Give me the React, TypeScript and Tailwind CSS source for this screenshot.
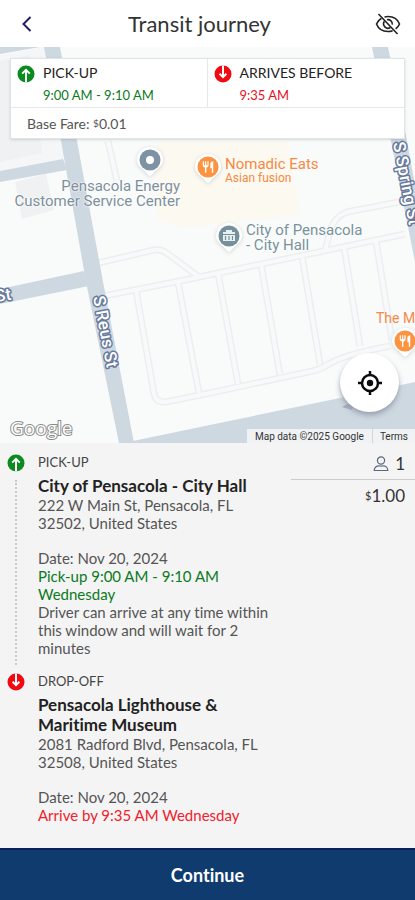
import React from "react";
import { MdRestaurant } from "react-icons/md";

interface StopProps {
  label: string;
  name: string;
  address: string;
  date: string;
  time: string;
  note?: string;
  kind: "up" | "down";
}

interface PinProps {
  color: string;
  children?: React.ReactNode;
}

const StopIcon: React.FC<{ kind: "up" | "down" }> = ({ kind }) => (
  <svg viewBox="0 0 18 18" className="h-[18px] w-[18px] shrink-0" aria-hidden="true">
    <circle cx="9" cy="9" r="8.5" fill={kind === "up" ? "#0b8a1f" : "#f00a12"} />
    {kind === "up" ? (
      <path d="M9 17.5V5M5.2 8.6 9 4.8l3.8 3.8" fill="none" stroke="#fff" strokeWidth="2" />
    ) : (
      <path d="M9 .5V12M5.6 8.8 9 12.2l3.4-3.4" fill="none" stroke="#fff" strokeWidth="2" />
    )}
  </svg>
);

const EyeOffIcon = () => (
  <svg viewBox="0 0 26 22" className="h-[22px] w-[26px]" fill="none" stroke="#222" strokeWidth="1.6" aria-hidden="true">
    <path d="M6.5 5.3C4 6.800 2.200 9 1.500 11c1.700 4.500 6.200 7.500 11.500 7.500 1.600 0 3.200-.3 4.600-.8" />
    <path d="M9.500 3.900c1.100-.3 2.300-.4 3.500-.4 5.300 0 9.800 3 11.500 7.500-.7 1.900-2.100 3.600-3.900 4.900" />
    <path d="M9.400 8.300a4.400 4.400 0 0 0 6 6.200M12 6.700a4.400 4.400 0 0 1 5.300 5" />
    <path d="m3.500 1 19 20" />
  </svg>
);

const PersonIcon = () => (
  <svg viewBox="0 0 16 18" className="h-[18px] w-4" fill="none" stroke="#5c6782" strokeWidth="1.2" aria-hidden="true">
    <circle cx="8" cy="5.5" r="3.6" />
    <path d="M1.200 15.500c0-3.200 2.600-4.700 4.600-4.700.8.5 3.600.5 4.400 0 2 0 4.600 1.500 4.600 4.700z" />
  </svg>
);

const Pin: React.FC<PinProps> = ({ color, children }) => (
  <span className="relative flex h-[30px] w-[26px] shrink-0 justify-center pt-[3px]">
    <svg viewBox="0 0 26 30" className="absolute inset-0 drop-shadow-sm" aria-hidden="true">
      <path d="M13 0a13 13 0 0 1 13 13c0 6-6 8.500-10.500 14-1.500 2.200-3.500 2.200-5 0C6 21.500 0 19 0 13A13 13 0 0 1 13 0z" fill="#fff" />
      <circle cx="13" cy="13" r="10.500" fill={color} />
    </svg>
    <span className="relative flex h-5 items-center text-white">{children}</span>
  </span>
);

const MuseumIcon = () => (
  <svg viewBox="0 0 14 12" className="h-3 w-[14px]" fill="#e9f0f2" aria-hidden="true">
    <path d="M4 0h6v2h3v2H1V2h3zM1 5h12v6H1z" />
    <path d="M3.500 6v4M7 6v4M10.500 6v4" stroke="#75909b" strokeWidth="1.200" />
  </svg>
);

const parkingLanes =
  "M104 249 180 234 405 187M98 216l56-13q8-1 14 4l31 23M325 204l5-20q4-14 17-19l52-10M108 94l9 40M136 243l18 104q2 9 12 8l39-8 108-23q10-3 16-7 14-9 61-18M178 235l21 111M218 226l20 111M261 217l19 111M302 209l18 108M344 200l16 99M376 194l16 99";

const MapCanvas = () => (
  <svg
    viewBox="0 0 415 396"
    preserveAspectRatio="xMidYMid slice"
    className="absolute inset-0 h-full w-full"
    aria-hidden="true"
  >
    <rect width="415" height="396" fill="#f9fafa" />
    <path d="M0 8 45 0l18 94 4 18-67 14z" fill="#f5f6f7" />
    <path d="M0 14l30-6 12 98-42 9zM15 135l31-8 8 36-32 9z" fill="#f0f1f2" />
    <path d="M157 94h131l12 74-121 13-22-9z" fill="#fcf9f0" />
    <path d={parkingLanes} fill="none" stroke="#eceef0" strokeWidth="7" strokeLinejoin="round" />
    <path d={parkingLanes} fill="none" stroke="#f8f9fa" strokeWidth="4" strokeLinejoin="round" />
    <g fill="#ced8e1">
      <path d="M0 0h40L0 7z" />
      <path d="M44 0h16l17 94 27 146 30 156h-15L87 240 61 94z" />
      <path d="M0 124l63-12 4 11-67 12zM0 242l84-18 5 15-89 18z" />
      <path d="M372 0h16l19 94 8 44v77L391 94z" />
      <path d="M133 394l72-15 135-28 75-16v61H133z" />
    </g>
    <path d="m342 360 13-7-3 10z" fill="#a3adba" />
    <g
      fill="#fff"
      stroke="#67799c"
      strokeWidth="3"
      paintOrder="stroke"
      strokeLinejoin="round"
      className="font-['Roboto'] text-[17px] font-medium"
    >
      <text transform="translate(93 250) rotate(79)">S Reus St</text>
      <text transform="translate(393 96) rotate(79)">S Spring St</text>
      <text transform="translate(-4 255) rotate(-9)">St</text>
    </g>
    <text
      x="10"
      y="388"
      fill="#fff"
      stroke="#8b8b8b"
      strokeWidth="2"
      paintOrder="stroke"
      className="font-['Open_Sans'] text-[19px] font-medium"
    >
      Google
    </text>
  </svg>
);

const JourneyMap = () => (
  <section className="relative h-[396px] overflow-hidden font-['Roboto',sans-serif]" aria-label="Map">
    <MapCanvas />

    <div className="absolute left-4 top-[100px] flex w-[164px] flex-col items-end text-right text-[15px] leading-[15px] text-[#7d909c]">
      <span className="mr-[17px]">
        <Pin color="#7d92a2">
          <span className="h-2 w-2 rounded-full bg-white" />
        </Pin>
      </span>
      <span className="whitespace-nowrap pt-[2px] [text-shadow:0_0_2px_#fff,0_0_2px_#fff]">
        Pensacola Energy
        <br />
        Customer Service Center
      </span>
    </div>
    <div className="absolute left-[195px] top-[107px] flex gap-1 text-[#f58a46]">
      <Pin color="#fb9340">
        <MdRestaurant size={14} />
      </Pin>
      <span className="pt-[3px] text-[15px] leading-[15px]">
        Nomadic Eats
        <span className="block text-xs leading-3">Asian fusion</span>
      </span>
    </div>
    <div className="absolute left-[216px] top-[176px] flex gap-1 text-[15px] leading-[15px] text-[#78929b]">
      <Pin color="#75909b">
        <MuseumIcon />
      </Pin>
      <span className="[text-shadow:0_0_2px_#fff,0_0_2px_#fff]">
        City of Pensacola
        <br />- City Hall
      </span>
    </div>
    <div className="absolute left-[376px] top-[264px] whitespace-nowrap text-sm leading-[15px] text-[#f58a46]">
      The M
      <span className="ml-4 block pt-[2px]">
        <Pin color="#fb9340">
          <MdRestaurant size={14} />
        </Pin>
      </span>
    </div>

    <div className="absolute inset-x-[10px] top-[11px] border border-[#dde5e9] bg-white font-['Lato',sans-serif] shadow-sm">
      <div className="grid grid-cols-2 border-b border-[#e4e8eb]">
        <div className="flex gap-2 border-r border-[#e4e8eb] px-[6px] pb-1 pt-[6px]">
          <StopIcon kind="up" />
          <div className="text-[13px] text-[#0b7a22]">
            <h2 className="text-sm leading-4 text-[#222]">PICK-UP</h2>
            <p className="mt-[6px] leading-4">9:00 AM - 9:10 AM</p>
          </div>
        </div>
        <div className="flex gap-2 px-[6px] pb-1 pt-[6px]">
          <StopIcon kind="down" />
          <div className="text-[13px] text-[#e8101f]">
            <h2 className="text-sm leading-4 text-[#222]">ARRIVES BEFORE</h2>
            <p className="mt-[6px] leading-4">9:35 AM</p>
          </div>
        </div>
      </div>
      <p className="px-4 pb-[5px] pt-[7px] text-sm leading-[18px] text-[#555]">
        Base Fare: <span className="align-[2px] text-[10px] leading-none">$</span>0.01
      </p>
    </div>

    <button
      aria-label="Center map"
      className="absolute bottom-[31px] right-4 flex h-[59px] w-[59px] items-center justify-center rounded-full bg-white shadow-md shadow-gray-400"
    >
      <svg viewBox="0 0 26 26" className="h-[26px] w-[26px]" fill="none" stroke="#0c0c10" strokeWidth="2.500">
        <circle cx="13" cy="13" r="8" />
        <circle cx="13" cy="13" r="3.200" fill="#0c0c10" stroke="none" />
        <path d="M13 1v4M13 21v4M1 13h4M21 13h4" />
      </svg>
    </button>

    <div className="absolute bottom-0 right-0 flex h-[14px] items-center bg-[#f0f2f4] text-[10px] text-[#333]">
      <span className="px-2">Map data ©2025 Google</span>
      <a href="#terms" className="border-l border-gray-300 px-[7px]">
        Terms
      </a>
    </div>
  </section>
);

const Stop: React.FC<StopProps> = ({ label, name, address, date, time, note, kind }) => (
  <li className="flex gap-[13px]">
    <div className="flex w-[18px] flex-col items-center gap-2">
      <StopIcon kind={kind} />
      {kind === "up" && <span className="mb-2 flex-1 border-l-2 border-dotted border-[#c9c9c9]" />}
    </div>
    <div className={kind === "up" ? "flex-1 pb-4" : "flex-1"}>
      <h2 className="text-[13px] leading-4 text-[#444]">{label}</h2>
      <h3 className="mt-[6px] text-[17px] font-bold leading-5 text-[#222]">{name}</h3>
      <p className="text-[15px] leading-[18px] text-[#555]">{address}</p>
      <p className="mt-[17px] text-[15px] leading-[18px] text-[#555]">{date}</p>
      <p className={kind === "up" ? "text-[15px] leading-[18px] text-[#0b7a22]" : "text-[15px] leading-[18px] text-[#f0202c]"}>
        {time}
      </p>
      {note && <p className="text-[15px] leading-[18px] text-[#555]">{note}</p>}
    </div>
  </li>
);

export default function App() {
  return (
    <div className="flex min-h-screen flex-col bg-[#f4f4f4] font-['Lato',sans-serif] [font-variant-ligatures:none]">
      <header className="flex h-[47px] items-center bg-white px-[14px]">
        <button aria-label="Back" className="flex w-[26px] justify-center">
          <svg viewBox="0 0 10 16" className="h-4 w-[10px]" fill="none" stroke="#1f1f66" strokeWidth="2" aria-hidden="true">
            <path d="M8.500 1 1.500 8l7 7" />
          </svg>
        </button>
        <h1 className="flex-1 pr-4 text-center text-[22px] leading-7 text-[#333]">Transit journey</h1>
        <button aria-label="Hide map">
          <EyeOffIcon />
        </button>
      </header>

      <JourneyMap />

      <main className="flex flex-1">
        <ol className="w-[70%] pb-5 pl-[7px] pr-3 pt-[11px]">
          <Stop
            kind="up"
            label="PICK-UP"
            name="City of Pensacola - City Hall"
            address="222 W Main St, Pensacola, FL 32502, United States"
            date="Date: Nov 20, 2024"
            time="Pick-up 9:00 AM - 9:10 AM Wednesday"
            note="Driver can arrive at any time within this window and will wait for 2 minutes"
          />
          <Stop
            kind="down"
            label="DROP-OFF"
            name="Pensacola Lighthouse & Maritime Museum"
            address="2081 Radford Blvd, Pensacola, FL 32508, United States"
            date="Date: Nov 20, 2024"
            time="Arrive by 9:35 AM Wednesday"
          />
        </ol>
        <aside className="w-[30%] pt-[9px] text-[17px] leading-6 text-[#333]">
          <p className="flex items-center justify-end gap-[6px] border-b border-[#ccc] pb-[3px] pr-[10px]">
            <PersonIcon />1
          </p>
          <p className="pr-[10px] pt-1 text-right">
            <span className="align-[2px] text-[11px] leading-none">$</span>1.00
          </p>
        </aside>
      </main>

      <button className="h-[52px] w-full border-t-2 border-[#0a1f5c] bg-[#103b6f] text-lg font-bold text-white">
        Continue
      </button>
    </div>
  );
}
